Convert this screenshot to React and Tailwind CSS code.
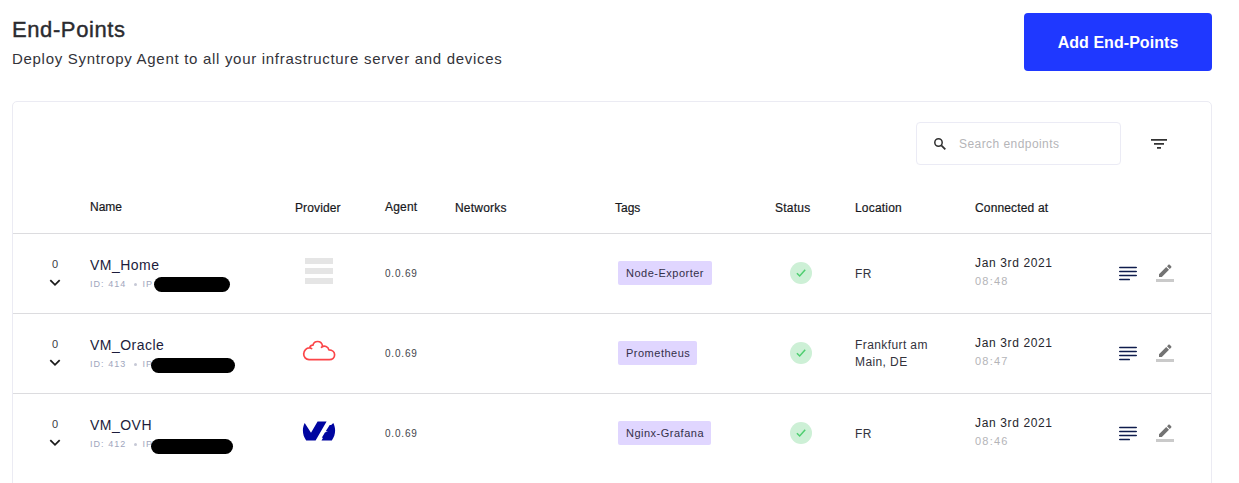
const columns = "grid grid-cols-[77px_205px_90px_70px_160px_160px_80px_120px_144px_37px_1fr]";

const endpoints = [
  { name: "VM_Home", id: 414, provider: "generic", tag: "Node-Exporter", tagWidth: "w-[94px]", location: "FR", time: "08:48", mask: "left-[64px] top-[-1px] w-[76px]" },
  { name: "VM_Oracle", id: 413, provider: "oracle", tag: "Prometheus", tagWidth: "w-[79px]", location: "Frankfurt am Main, DE", time: "08:47", mask: "left-[60.5px] top-0 w-[84px]" },
  { name: "VM_OVH", id: 412, provider: "ovh", tag: "Nginx-Grafana", tagWidth: "w-[93px]", location: "FR", time: "08:46", mask: "left-[60.5px] top-px w-[82px]" },
];

function ProviderIcon({ type }) {
  if (type === "oracle")
    return (
      <svg width="34" height="22" viewBox="0 0 34 22" fill="none" stroke="#fb4548" strokeWidth="1.7" strokeLinejoin="round" strokeLinecap="round">
        <path d="M7 19.700a5.600 5.600 0 0 1-5.300-5.800c0-3.500 2.800-6.200 6.200-5.900.6 0 1.200.3 1.700.6M7.900 8c-.2-2 1.700-3 3-2.800C11.500 2.800 13.300 1.500 15.600 1.500c2.400 0 4.500 1.800 4.900 4.400M19.500 7.300c3-2.200 6.700-.8 7.400 2.600 3.500 0 5.700 2.200 5.700 4.900 0 2.900-2.200 4.900-5.200 4.900H7" />
      </svg>
    );
  if (type === "ovh")
    return (
      <svg width="34" height="22" viewBox="0 0 34 22" fill="#0005a0">
        <path d="M2.700 3 9 12.800 15.600 1.500H24.600L13.600 20.500H4.200C.3 15.300-.1 8.500 2.700 3Z" />
        <path d="M31.300 3C34.100 8.500 33.700 15.300 29.800 20.500H19.500l1.600-2.800h-1.300l3.100-5.200 3-1.200h-2.200l4-6.300h1.500Z" />
      </svg>
    );
  return (
    <svg width="34" height="26" viewBox="0 0 34 26" fill="#e5e5e5">
      <path d="M3 0h28v6H3zM3 10h28v6H3zM3 20h28v6H3z" />
    </svg>
  );
}

function Header() {
  const cell = "text-[12px] leading-[16px] text-[#17181c] [-webkit-text-stroke:0.2px_#17181c] whitespace-nowrap";
  return (
    <div className={`${columns} h-[69px] border-b border-[#dcdcdf] pt-[34px]`}>
      <span />
      <span className={cell}>Name</span>
      <span className={`${cell} pt-px tracking-[0.12px]`}>Provider</span>
      <span className={`${cell} tracking-[0.2px]`}>Agent</span>
      <span className={`${cell} pt-px tracking-[0.2px]`}>Networks</span>
      <span className={`${cell} pt-px`}>Tags</span>
      <span className={`${cell} pt-px tracking-[0.25px]`}>Status</span>
      <span className={`${cell} pt-px tracking-[0.2px]`}>Location</span>
      <span className={`${cell} pt-px tracking-[0.15px]`}>Connected at</span>
    </div>
  );
}

function Row({ e }) {
  return (
    <div className={`${columns} h-20 border-b border-[#dcdcdf] last:border-b-0`}>
      <div className="flex flex-col items-center pl-[7px] pt-[22px]">
        <span className="text-[11px] leading-[16px] text-[#3b3b44]">0</span>
        <svg className="mt-[7px]" width="12" height="8" viewBox="0 0 12 8" fill="none" stroke="#1c1c1c" strokeWidth="1.800">
          <path d="M1.300 1.200 6 5.800 10.700 1.200" />
        </svg>
      </div>
      <div className="pt-[22px]">
        <div className="text-[14px] leading-[18px] tracking-[0.480px] text-[#1c1c3c]">{e.name}</div>
        <div className="relative mt-1 flex h-3 items-center text-[9px] leading-[12px] tracking-[1.050px] text-[#a0a6bd]">
          <span>ID: {e.id}</span>
          <span className="ml-[8px] mr-[5px] h-[3px] w-[3px] rounded-full bg-[#c6c9d6]" />
          <span>IP</span>
          <span className={`absolute h-[15px] rounded-full bg-black ${e.mask}`} />
        </div>
      </div>
      <div className="flex h-[74px] items-center pl-[7px]">
        <ProviderIcon type={e.provider} />
      </div>
      <div className="pt-[32px] text-[10px] leading-[16px] tracking-[0.800px] text-[#44444c]">0.0.69</div>
      <span />
      <div className="pl-[3px] pt-[27px]">
        <div className={`h-6 rounded-xs bg-[#e0d6ff] pl-2 text-[11px] leading-[24px] tracking-[0.500px] whitespace-nowrap text-[#34304a] ${e.tagWidth}`}>{e.tag}</div>
      </div>
      <div className="pl-[15px] pt-7">
        <svg width="22" height="22" viewBox="0 0 22 22" fill="none">
          <circle cx="11" cy="11" r="11" fill="#cdf0d6" />
          <path d="m6.900 11.200 2.800 2.800 5.500-6.300" stroke="#4fce70" strokeWidth="1.500" />
        </svg>
      </div>
      <div className="flex h-20 w-[88px] items-center text-[12px] leading-[17px] tracking-[0.400px] text-[#33333c]">{e.location}</div>
      <div className="pt-[21px]">
        <div className="text-[12px] leading-[16px] tracking-[0.630px] text-[#26262e]">Jan 3rd 2021</div>
        <div className="mt-[2px] text-[11px] leading-[16px] tracking-[1.200px] text-[#b4b4b8]">{e.time}</div>
      </div>
      <div className="pt-8">
        <svg width="18" height="16" viewBox="0 0 18 16" stroke="#0f1c4d" strokeWidth="1.700" strokeLinecap="round">
          <path d="M.8 1.500h16.400M.8 5.500h16.400M.8 9.500h16.400M.8 13.500h9.400" />
        </svg>
      </div>
      <div className="pt-[27px]">
        <svg width="18" height="24" viewBox="0 0 18 24">
          <path d="M3 13.200V16h2.800L13 8.800 10.200 6ZM15.200 6.600c.4-.4.4-.9 0-1.300l-1.500-1.500c-.4-.4-.9-.4-1.300 0L11 5.200 13.800 8Z" fill="#737373" />
          <path d="M0 18h18v3H0z" fill="#cacaca" />
        </svg>
      </div>
    </div>
  );
}

export default function App() {
  return (
    <div className="h-[483px] overflow-hidden bg-white pl-3 pr-[27px] pt-[13px] font-['Liberation_Sans',Arial,sans-serif]">
      <div className="flex h-[88px] items-start justify-between">
        <div className="pt-1">
          <h1 className="text-[22px] leading-[26px] tracking-[0.600px] text-[#2b2b2f] [-webkit-text-stroke:0.400px_#2b2b2f]">End-Points</h1>
          <p className="mt-[6px] text-[15px] leading-[20px] tracking-[0.700px] text-[#33333a]">Deploy Syntropy Agent to all your infrastructure server and devices</p>
        </div>
        <button className="h-[58px] w-[188px] rounded bg-[#1f38ff] pt-px text-[16px] font-bold tracking-[0.050px] text-white">Add End-Points</button>
      </div>
      <div className="h-[420px] rounded-[5px] border border-[#ebebf3]">
        <div className="flex h-[63px] items-start justify-end pr-[44px] pt-5">
          <div className="flex h-[43px] w-[205px] items-center rounded border border-[#ebebf5] pl-[17px]">
            <svg width="12" height="12" viewBox="0 0 12 12" fill="none" stroke="#303030">
              <circle cx="4.500" cy="4.500" r="3.700" strokeWidth="1.500" />
              <path d="m7.300 7.300 4 4" strokeWidth="1.800" />
            </svg>
            <span className="ml-[13px] text-[12px] tracking-[0.440px] text-[#b5b5b8]">Search endpoints</span>
          </div>
          <svg className="ml-[30px] mt-[16px]" width="16" height="11" viewBox="0 0 16 11" fill="#333">
            <path d="M0 1h16v1.700H0zM3 5h10v1.700H3zM6 9h4v1.700H6z" />
          </svg>
        </div>
        <Header />
        {endpoints.map((e) => <Row key={e.id} e={e} />)}
      </div>
    </div>
  );
}
